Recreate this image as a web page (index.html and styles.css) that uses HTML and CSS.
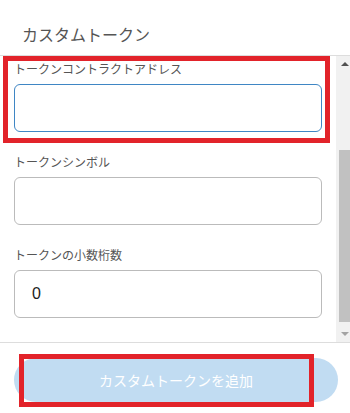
FILE: index.html
```html
<!DOCTYPE html>
<html lang="ja">
  <head>
    <meta charset="UTF-8" />
    <meta name="viewport" content="width=device-width, initial-scale=1.0" />
    <title>カスタムトークン</title>
    <link rel="stylesheet" href="styles.css">
  </head>

  <body>
    <div class="page">
      <h2 class="title">カスタムトークン</h2>

      <div class="scroll">
        <form class="fields">
          <label class="field">
            <span class="field-label">トークンコントラクトアドレス</span>
            <input class="field-input --is-focused" type="text" />
          </label>

          <label class="field">
            <span class="field-label">トークンシンボル</span>
            <input class="field-input" type="text" />
          </label>

          <label class="field">
            <span class="field-label">トークンの小数桁数</span>
            <input class="field-input" type="text" value="0" />
          </label>
        </form>

        <div class="scrollbar">
          <span class="arrow arrow-up"></span>
          <div class="track">
            <div class="thumb"></div>
          </div>
          <span class="arrow arrow-down"></span>
        </div>
      </div>

      <div class="footer">
        <button class="add-button" type="button" disabled>カスタムトークンを追加</button>
      </div>

      <!-- annotation boxes -->
      <div class="mark mark-fields"></div>
      <div class="mark mark-button"></div>
    </div>
  </body>
</html>
```

FILE: styles.css
```css
* {
  box-sizing: border-box;
  margin: 0;
  padding: 0;
}

body {
  background-color: #fff;
  font-family: "Noto Sans CJK JP", "Noto Sans", sans-serif;
  color: #555;
}

.page {
  position: relative;
  width: 350px;
  height: 413px;
  overflow: hidden;
}

.title {
  height: 55px;
  padding: 22px 0 0 22px;
  font-size: 16px;
  font-weight: normal;
  line-height: 24px;
  color: #555;
}

.scroll {
  display: flex;
  height: 288px;
  border-top: 1px solid #ddd;
  border-bottom: 1px solid #ddd;
  overflow: hidden;
}

.fields {
  display: flex;
  flex-direction: column;
  gap: 21px;
  width: 336px;
  padding: 4px 14px 0;
}

.field {
  display: flex;
  flex-direction: column;
  gap: 6px;
}

.field-label {
  font-size: 12px;
  line-height: 18px;
  color: #555;
}

.field-input {
  height: 48px;
  padding: 0 17px;
  border: 1px solid #bbb;
  border-radius: 6px;
  font-family: "Liberation Sans", Arial, sans-serif;
  font-size: 16px;
  color: #222;
  outline: none;
}

.field-input.--is-focused {
  border-color: #3f86c4;
}

.scrollbar {
  display: flex;
  flex-direction: column;
  width: 14px;
  background-color: #f1f1f1;
}

.arrow {
  display: flex;
  justify-content: center;
  align-items: center;
  height: 16px;
  padding-left: 3px;
}

.arrow::before {
  content: "";
  border-left: 4px solid transparent;
  border-right: 4px solid transparent;
}

.arrow-up::before {
  border-bottom: 4px solid #505050;
}

.arrow-down::before {
  border-top: 4px solid #a3a3a3;
}

.track {
  flex: 1;
  padding-left: 3px;
}

.thumb {
  margin-top: 78px;
  height: 172px;
  background-color: #c1c1c1;
}

.footer {
  padding: 15px 12px 0 14px;
}

.add-button {
  width: 324px;
  height: 44px;
  border: none;
  border-radius: 22px;
  background-color: #c1dcf2;
  color: #fff;
  font-family: "Noto Sans CJK JP", sans-serif;
  font-size: 14px;
}

.mark {
  position: absolute;
  border: 5px solid #e2232a;
  pointer-events: none;
}

.mark-fields {
  left: 3px;
  top: 56px;
  width: 327px;
  height: 87px;
}

.mark-button {
  left: 19px;
  top: 354px;
  width: 295px;
  height: 53px;
}
```
